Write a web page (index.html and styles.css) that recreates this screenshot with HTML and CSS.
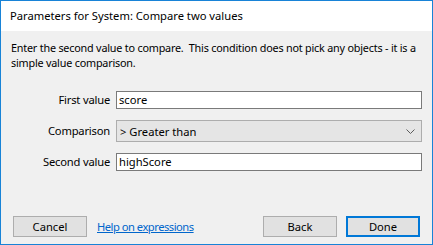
FILE: index.html
```html
<!DOCTYPE html>
<html lang="en">
<head>
    <meta charset="UTF-8">
    <title>Parameters for System: Compare two values</title>
    <link rel="stylesheet" href="styles.css">
</head>
<body>
    <div class="dialog">
        <div class="titlebar">Parameters for System: Compare two values</div>
        <div class="content">
            <p class="desc">Enter the second value to compare.&nbsp; This condition does not pick any objects - it is a<br>simple value comparison.</p>

            <div class="form">
                <label class="label">First value</label>
                <div class="field">score</div>

                <label class="label">Comparison</label>
                <div class="select">
                    <span>&gt; Greater than</span>
                    <svg class="chevron" width="9" height="5" viewBox="0 0 9 5">
                        <polyline points="0.5,0.5 4.5,4.5 8.5,0.5" fill="none" stroke="#5c5c5c" stroke-width="1"/>
                    </svg>
                </div>

                <label class="label">Second value</label>
                <div class="field">highScore</div>
            </div>

            <div class="footer">
                <button class="btn">Cancel</button>
                <a class="help-link" href="#">Help on expressions</a>
                <span class="spacer"></span>
                <button class="btn">Back</button>
                <button class="btn btn-default">Done</button>
            </div>
        </div>
    </div>
</body>
</html>
```

FILE: styles.css
```css
body {
    margin: 0;
    font-family: "Noto Sans", "Open Sans", sans-serif;
    font-size: 11.2px;
    color: #000;
    background-color: #f0f0f0;
}

.dialog {
    box-sizing: border-box;
    width: 433px;
    height: 245px;
    border: 1px solid #1883d7;
    display: flex;
    flex-direction: column;
    background-color: #f0f0f0;
}

.titlebar {
    height: 30px;
    line-height: 30px;
    padding-left: 9px;
    background-color: #fff;
}

.content {
    flex: 1;
    display: flex;
    flex-direction: column;
}

.desc {
    margin: 9px 0 0 0;
    padding: 0 10px;
    font-size: 10.8px;
    letter-spacing: -0.2px;
    line-height: 15px;
    white-space: nowrap;
}

.form {
    display: grid;
    grid-template-columns: 109px 306px;
    grid-template-rows: 18px 22px 18px;
    column-gap: 6px;
    row-gap: 11px;
    margin-top: 21px;
    align-items: center;
}

.label {
    text-align: right;
    margin-top: -2px;
    letter-spacing: -0.2px;
}

.field {
    box-sizing: border-box;
    height: 18px;
    line-height: 16px;
    padding-left: 2px;
    border: 1px solid #7a7a7a;
    background-color: #fff;
}

.select {
    box-sizing: border-box;
    height: 22px;
    display: flex;
    align-items: center;
    justify-content: space-between;
    padding: 0 6px 0 3px;
    border: 1px solid #adadad;
    background-color: #e5e5e5;
}

.footer {
    margin-top: auto;
    display: flex;
    align-items: center;
    padding: 0 12px 7px 12px;
}

.btn {
    box-sizing: border-box;
    width: 74px;
    height: 21px;
    padding: 0;
    font-family: inherit;
    font-size: 11.2px;
    color: #000;
    background-color: #e1e1e1;
    border: 1px solid #adadad;
}

.btn + .btn {
    margin-left: 9px;
}

.btn-default {
    border: 2px solid #0078d7;
}

.help-link {
    margin-left: 10px;
    color: #0066cc;
    text-decoration: underline;
    letter-spacing: -0.5px;
}

.spacer {
    flex: 1;
}
```
